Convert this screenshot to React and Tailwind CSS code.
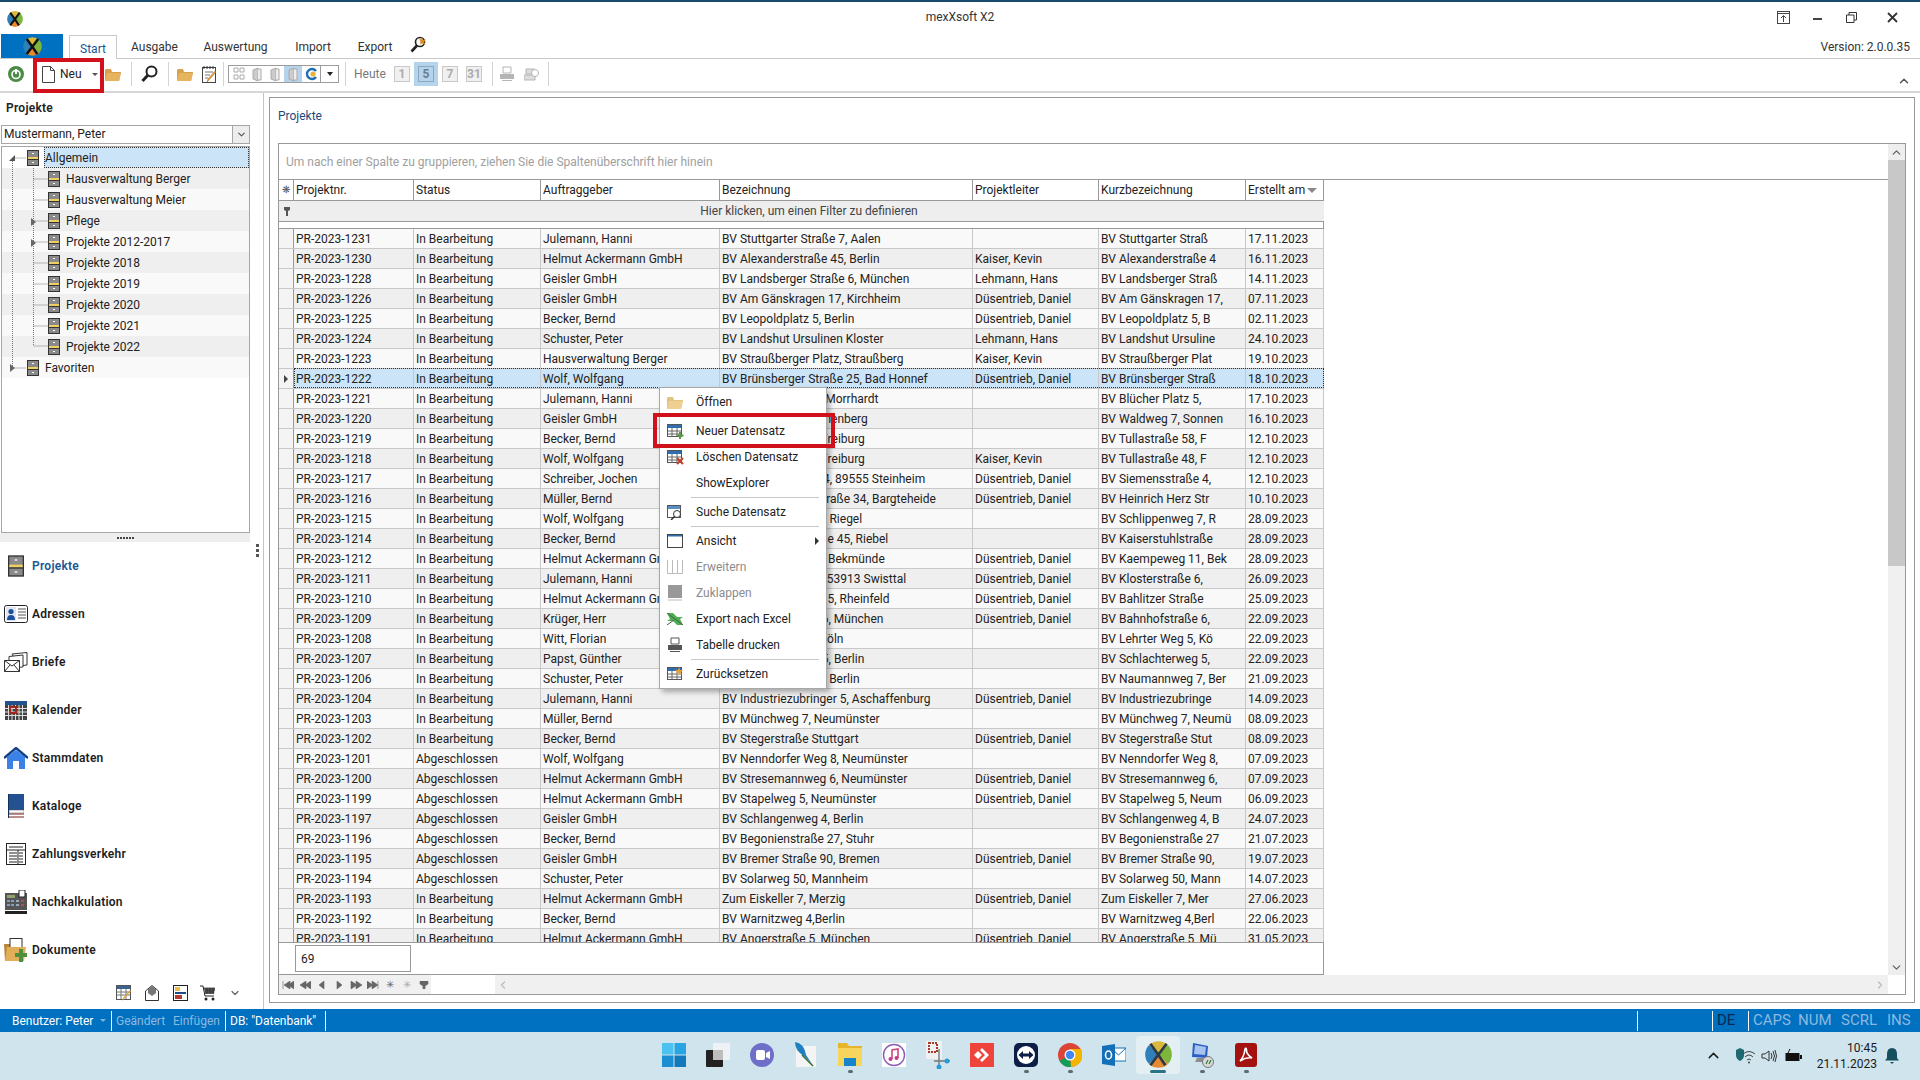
import { ChevronUp, ChevronDown, ChevronLeft, ChevronRight } from 'lucide-react';

const IB = 'In Bearbeitung';
const AB = 'Abgeschlossen';
const DD = 'Düsentrieb, Daniel';
const HA = 'Helmut Ackermann GmbH';

const rows = [
  ['PR-2023-1231', IB, 'Julemann, Hanni', 'BV Stuttgarter Straße 7, Aalen', '', 'BV Stuttgarter Straß', '17.11.2023'],
  ['PR-2023-1230', IB, HA, 'BV Alexanderstraße 45, Berlin', 'Kaiser, Kevin', 'BV Alexanderstraße 4', '16.11.2023'],
  ['PR-2023-1228', IB, 'Geisler GmbH', 'BV Landsberger Straße 6, München', 'Lehmann, Hans', 'BV Landsberger Straß', '14.11.2023'],
  ['PR-2023-1226', IB, 'Geisler GmbH', 'BV Am Gänskragen 17, Kirchheim', DD, 'BV Am Gänskragen 17,', '07.11.2023'],
  ['PR-2023-1225', IB, 'Becker, Bernd', 'BV Leopoldplatz 5, Berlin', DD, 'BV Leopoldplatz 5, B', '02.11.2023'],
  ['PR-2023-1224', IB, 'Schuster, Peter', 'BV Landshut Ursulinen Kloster', 'Lehmann, Hans', 'BV Landshut Ursuline', '24.10.2023'],
  ['PR-2023-1223', IB, 'Hausverwaltung Berger', 'BV Straußberger Platz, Straußberg', 'Kaiser, Kevin', 'BV Straußberger Plat', '19.10.2023'],
  ['PR-2023-1222', IB, 'Wolf, Wolfgang', 'BV Brünsberger Straße 25, Bad Honnef', DD, 'BV Brünsberger Straß', '18.10.2023'],
  ['PR-2023-1221', IB, 'Julemann, Hanni', 'BV Blücher Platz 5, Morrhardt', '', 'BV Blücher Platz 5,', '17.10.2023'],
  ['PR-2023-1220', IB, 'Geisler GmbH', 'BV Waldweg 7, Sonnenberg', '', 'BV Waldweg 7, Sonnen', '16.10.2023'],
  ['PR-2023-1219', IB, 'Becker, Bernd', 'BV Tullastraße 58, Freiburg', '', 'BV Tullastraße 58, F', '12.10.2023'],
  ['PR-2023-1218', IB, 'Wolf, Wolfgang', 'BV Tullastraße 48, Freiburg', 'Kaiser, Kevin', 'BV Tullastraße 48, F', '12.10.2023'],
  ['PR-2023-1217', IB, 'Schreiber, Jochen', 'BV Siemensstraße 4, 89555 Steinheim', DD, 'BV Siemensstraße 4,', '12.10.2023'],
  ['PR-2023-1216', IB, 'Müller, Bernd', 'BV Heinrich Herz Straße 34, Bargteheide', DD, 'BV Heinrich Herz Str', '10.10.2023'],
  ['PR-2023-1215', IB, 'Wolf, Wolfgang', 'BV Schlippenweg 7, Riegel', '', 'BV Schlippenweg 7, R', '28.09.2023'],
  ['PR-2023-1214', IB, 'Becker, Bernd', 'BV Kaiserstuhlstraße 45, Riebel', '', 'BV Kaiserstuhlstraße', '28.09.2023'],
  ['PR-2023-1212', IB, HA, 'BV Kaempeweg 11, Bekmünde', DD, 'BV Kaempeweg 11, Bek', '28.09.2023'],
  ['PR-2023-1211', IB, 'Julemann, Hanni', 'BV Klosterstraße 6, 53913 Swisttal', DD, 'BV Klosterstraße 6,', '26.09.2023'],
  ['PR-2023-1210', IB, HA, 'BV Bahlitzer Straße 5, Rheinfeld', DD, 'BV Bahlitzer Straße', '25.09.2023'],
  ['PR-2023-1209', IB, 'Krüger, Herr', 'BV Bahnhofstraße 6, München', DD, 'BV Bahnhofstraße 6,', '22.09.2023'],
  ['PR-2023-1208', IB, 'Witt, Florian', 'BV Lehrter Weg 5, Köln', '', 'BV Lehrter Weg 5, Kö', '22.09.2023'],
  ['PR-2023-1207', IB, 'Papst, Günther', 'BV Schlachterweg 5, Berlin', '', 'BV Schlachterweg 5,', '22.09.2023'],
  ['PR-2023-1206', IB, 'Schuster, Peter', 'BV Naumannweg 7, Berlin', '', 'BV Naumannweg 7, Ber', '21.09.2023'],
  ['PR-2023-1204', IB, 'Julemann, Hanni', 'BV Industriezubringer 5, Aschaffenburg', DD, 'BV Industriezubringe', '14.09.2023'],
  ['PR-2023-1203', IB, 'Müller, Bernd', 'BV Münchweg 7, Neumünster', '', 'BV Münchweg 7, Neumü', '08.09.2023'],
  ['PR-2023-1202', IB, 'Becker, Bernd', 'BV Stegerstraße Stuttgart', DD, 'BV Stegerstraße Stut', '08.09.2023'],
  ['PR-2023-1201', AB, 'Wolf, Wolfgang', 'BV Nenndorfer Weg 8, Neumünster', '', 'BV Nenndorfer Weg 8,', '07.09.2023'],
  ['PR-2023-1200', AB, HA, 'BV Stresemannweg 6, Neumünster', DD, 'BV Stresemannweg 6,', '07.09.2023'],
  ['PR-2023-1199', AB, HA, 'BV Stapelweg 5, Neumünster', DD, 'BV Stapelweg 5, Neum', '06.09.2023'],
  ['PR-2023-1197', AB, 'Geisler GmbH', 'BV Schlangenweg 4, Berlin', '', 'BV Schlangenweg 4, B', '24.07.2023'],
  ['PR-2023-1196', AB, 'Becker, Bernd', 'BV Begonienstraße 27, Stuhr', '', 'BV Begonienstraße 27', '21.07.2023'],
  ['PR-2023-1195', AB, 'Geisler GmbH', 'BV Bremer Straße 90, Bremen', DD, 'BV Bremer Straße 90,', '19.07.2023'],
  ['PR-2023-1194', AB, 'Schuster, Peter', 'BV Solarweg 50, Mannheim', '', 'BV Solarweg 50, Mann', '14.07.2023'],
  ['PR-2023-1193', IB, HA, 'Zum Eiskeller 7, Merzig', DD, 'Zum Eiskeller 7, Mer', '27.06.2023'],
  ['PR-2023-1192', IB, 'Becker, Bernd', 'BV Warnitzweg 4,Berlin', '', 'BV Warnitzweg 4,Berl', '22.06.2023'],
  ['PR-2023-1191', IB, HA, 'BV Angerstraße 5, München', DD, 'BV Angerstraße 5, Mü', '31.05.2023'],
];

const headers = ['Projektnr.', 'Status', 'Auftraggeber', 'Bezeichnung', 'Projektleiter', 'Kurzbezeichnung', 'Erstellt am'];
const gridCols = 'grid grid-cols-[15px_120px_127px_179px_253px_126px_147px_78px]';

const treeRows = [
  { label: 'Allgemein', level: 0, selected: true },
  { label: 'Hausverwaltung Berger', level: 1 },
  { label: 'Hausverwaltung Meier', level: 1 },
  { label: 'Pflege', level: 1 },
  { label: 'Projekte 2012-2017', level: 1 },
  { label: 'Projekte 2018', level: 1 },
  { label: 'Projekte 2019', level: 1 },
  { label: 'Projekte 2020', level: 1 },
  { label: 'Projekte 2021', level: 1 },
  { label: 'Projekte 2022', level: 1 },
  { label: 'Favoriten', level: 0 },
];

function Logo({ size = 16, x = 3, ink = '#111' }) {
  return (
    <svg width={size} height={size} viewBox="0 0 20 20" className="shrink-0">
      <path d="M10 10 L3 3 A10 10 0 0 1 17 3 Z" fill="#d9b83c" />
      <path d="M10 10 L17 3 A10 10 0 0 1 17 17 Z" fill="#7cb63a" />
      <path d="M10 10 L17 17 A10 10 0 0 1 3 17 Z" fill="#e58a2e" />
      <path d="M10 10 L3 17 A10 10 0 0 1 3 3 Z" fill="#2f7fb8" />
      <path d="M4 2 Q10 10 15 18 M16 2 Q10 10 4 18" stroke={ink} strokeWidth={x} fill="none" />
    </svg>
  );
}

function Cabinet({ w = 12, h = 16 }) {
  return (
    <svg width={w} height={h} viewBox="0 0 12 16" className="shrink-0">
      <rect width="12" height="16" fill="#333" />
      <rect x="1" y="1" width="10" height="14" fill="#8a8a8a" />
      <rect x="1" y="7" width="10" height="2" fill="#f0cf62" />
      <rect x="1" y="9" width="10" height="1" fill="#333" />
      <rect x="5" y="3" width="2" height="1" fill="#fff" />
      <rect x="5" y="12" width="2" height="1" fill="#fff" />
    </svg>
  );
}

function Folder({ w = 16, h = 13, muted }) {
  return (
    <svg width={w} height={h} viewBox="0 0 16 13" className="shrink-0">
      <path d="M0 2 L0 13 L14 13 L16 4 L7 4 L6 1 L1 1 Z" fill={muted ? '#e5c27f' : '#d9a24a'} />
      <path d="M2 5 L16 5 L14 13 L0 13 Z" fill={muted ? '#efd092' : '#e6b35f'} />
    </svg>
  );
}

function GridIcon({ badge }) {
  return (
    <svg width="17" height="15" viewBox="0 0 17 15" className="shrink-0">
      <rect x="0.5" y="0.5" width="14" height="12" fill="#fff" stroke="#555" />
      <rect x="1" y="1" width="13" height="3" fill="#2f6fb0" />
      <path d="M1 7 H14 M1 10 H14 M5 4 V12 M10 4 V12" stroke="#666" />
      {badge === 'plus' && <path d="M13 8 V15 M9.5 11.5 H16.5" stroke="#5e9a4a" strokeWidth="2" />}
      {badge === 'x' && <path d="M10 8 L16 14 M16 8 L10 14" stroke="#c0452f" strokeWidth="2.2" />}
      {badge === 'star' && <path d="M12 0 L13 3 L16 3 L14 5 L15 8 L12 6 L9 8 L10 5 L8 3 L11 3 Z" fill="#e6a23a" />}
    </svg>
  );
}

function Printer({ color = '#555' }) {
  return (
    <svg width="16" height="16" viewBox="0 0 16 16" className="shrink-0">
      <path d="M4 1 H12 V7 H4 Z" fill="#fff" stroke={color} />
      <path d="M1 8 H15 V13 H1 Z" fill={color} />
      <path d="M3 14.5 H13" stroke={color} />
    </svg>
  );
}

function Magnifier() {
  return (
    <svg width="17" height="18" viewBox="0 0 17 18" className="shrink-0">
      <circle cx="10.5" cy="6.5" r="5" fill="#fff" stroke="#222" strokeWidth="2" />
      <path d="M7 10 L1.5 16" stroke="#222" strokeWidth="3" />
    </svg>
  );
}

function Sep() {
  return <div className="h-[24px] w-px bg-[#d4d4d4]" />;
}

function CalBtn({ children }) {
  return (
    <div className="flex h-[16px] w-[16px] items-center justify-center border border-[#c9c9c9] bg-[#f0f0f0] text-[12px] leading-none font-bold text-[#aaaaaa]">
      {children}
    </div>
  );
}

function SmallView({ kind }) {
  if (kind === 'tree')
    return (
      <svg width="12" height="14" viewBox="0 0 12 14">
        <path d="M1 1 H5 V5 H1 Z M1 8 H5 V12 H1 Z M7 1 H11 V5 H7 Z M7 8 H11 V12 H7 Z" fill="none" stroke="#aaa" />
      </svg>
    );
  return (
    <svg width="10" height="15" viewBox="0 0 10 15">
      <path d="M1 3 L6 1 V14 L1 12 Z" fill="#ccc" stroke="#aaa" />
      <path d="M6 2 H9 V13 H6" fill="#eee" stroke="#aaa" />
    </svg>
  );
}

function Toolbar() {
  return (
    <div className="flex h-[34px] items-center border-b-2 border-[#d8d8d8] bg-white pb-[2px] pl-[8px]">
      <svg width="16" height="16" viewBox="0 0 16 16" className="shrink-0">
        <circle cx="8" cy="8" r="8" fill="#4d8a45" />
        <circle cx="8" cy="8.5" r="4" fill="none" stroke="#fff" strokeWidth="1.6" />
        <path d="M8 3 V8" stroke="#fff" strokeWidth="2" />
      </svg>
      <svg width="13" height="17" viewBox="0 0 13 17" className="ml-[18px] shrink-0">
        <path d="M0.5 0.5 H8.5 L12.5 4.5 V16.5 H0.5 Z" fill="#fff" stroke="#444" />
        <path d="M8.5 0.5 V4.5 H12.5" fill="none" stroke="#444" />
      </svg>
      <span className="ml-[5px] w-[22px] text-[12px] text-[#222]">Neu</span>
      <span className="ml-[10px] h-0 w-0 border-x-[3px] border-t-[3px] border-x-transparent border-t-[#555]" />
      <div className="ml-[7px]"><Folder /></div>
      <div className="ml-[10px]"><Sep /></div>
      <div className="ml-[9px]"><Magnifier /></div>
      <div className="ml-[10px]"><Sep /></div>
      <div className="ml-[8px]"><Folder /></div>
      <svg width="15" height="17" viewBox="0 0 15 17" className="ml-[9px] shrink-0">
        <rect x="0.5" y="1.5" width="13" height="15" fill="#fff" stroke="#444" />
        <path d="M2 0 V3 M5 0 V3 M8 0 V3 M11 0 V3" stroke="#333" />
        <path d="M3 6 H11 M3 9 H8 M3 12 H6" stroke="#777" />
        <path d="M14 6 L7 14 L5 16 L6 13 L13 5 Z" fill="#e2a23a" stroke="#a5671d" strokeWidth="0.5" />
      </svg>
      <div className="ml-[6px]"><Sep /></div>
      <div className="ml-[4px] flex h-[18px] w-[111px] items-center border border-[#9c9c9c]">
        <div className="flex w-[18px] justify-center pl-[2px]"><SmallView kind="tree" /></div>
        <div className="flex w-[19px] justify-center"><SmallView /></div>
        <div className="flex w-[18px] justify-center"><SmallView /></div>
        <div className="flex h-full w-[18px] items-center justify-center bg-[#b5d4ec]"><SmallView /></div>
        <div className="flex w-[18px] justify-center">
          <svg width="12" height="14" viewBox="0 0 12 14">
            <path d="M11 4 A5 5 0 1 0 11 10" fill="none" stroke="#1f6fb5" strokeWidth="2.4" />
            <circle cx="8" cy="7" r="2.6" fill="#e8b23a" />
          </svg>
        </div>
        <div className="flex h-full flex-1 items-center justify-center border-l border-[#9c9c9c]">
          <span className="h-0 w-0 border-x-[3px] border-t-[4px] border-x-transparent border-t-[#222]" />
        </div>
      </div>
      <div className="ml-[6px]"><Sep /></div>
      <span className="ml-[8px] w-[32px] text-[12px] text-[#777]">Heute</span>
      <div className="ml-[8px]"><CalBtn>1</CalBtn></div>
      <div className="ml-[4px] flex h-[24px] w-[24px] items-center justify-center bg-[#b5d4ec]">
        <div className="flex h-[16px] w-[16px] items-center justify-center border border-[#8aa9c4] text-[12px] leading-none font-bold text-[#6c7f90]">5</div>
      </div>
      <div className="ml-[4px]"><CalBtn>7</CalBtn></div>
      <div className="ml-[8px]"><CalBtn>31</CalBtn></div>
      <div className="ml-[10px]"><Sep /></div>
      <div className="ml-[6px]"><Printer color="#b5b5b5" /></div>
      <svg width="16" height="16" viewBox="0 0 16 16" className="ml-[9px] shrink-0">
        <path d="M2 3 H10 V8 H2 Z M0 9 H11 V14 H0 Z" fill="#ddd" stroke="#b5b5b5" />
        <circle cx="11" cy="7" r="3.5" fill="#fff" stroke="#b5b5b5" />
      </svg>
      <div className="ml-[8px]"><Sep /></div>
      <ChevronUp size={14} strokeWidth={2.5} className="mt-[14px] mr-[9px] ml-auto text-[#555]" />
    </div>
  );
}

function NavIcon({ name }) {
  switch (name) {
    case 'Projekte':
      return <Cabinet w={16} h={22} />;
    case 'Adressen':
      return (
        <svg width="24" height="18" viewBox="0 0 24 18">
          <rect x="0.5" y="0.5" width="23" height="17" rx="2" fill="#fff" stroke="#222" />
          <rect x="2" y="2" width="10" height="14" fill="#dfe8f2" />
          <circle cx="7" cy="6.5" r="2.6" fill="#1d4f9c" />
          <path d="M3 15 Q3 10 7 10 Q11 10 11 15 Z" fill="#1d4f9c" />
          <path d="M14 4 H22 M14 7 H22 M14 10 H22 M14 13 H22" stroke="#555" />
        </svg>
      );
    case 'Briefe':
      return (
        <svg width="24" height="20" viewBox="0 0 24 20">
          <path d="M8 2 L23 0.5 V13 L15 14 Z" fill="#fff" stroke="#333" />
          <path d="M5 4.5 L19 3 V15 L5 16 Z" fill="#fff" stroke="#333" />
          <path d="M0.5 8.5 H15.5 V19.5 H0.5 Z" fill="#fff" stroke="#333" />
          <path d="M0.5 8.5 L8 14 L15.5 8.5 M0.5 19.5 L6 13 M15.5 19.5 L10 13" fill="none" stroke="#333" />
        </svg>
      );
    case 'Kalender':
      return (
        <svg width="22" height="19" viewBox="0 0 22 19">
          <rect width="22" height="19" fill="#444" />
          <rect width="22" height="4" fill="#23508f" />
          <path d="M0 7.5 H22 M0 11 H22 M0 14.5 H22 M3.5 4 V19 M7 4 V19 M10.5 4 V19 M14 4 V19 M17.5 4 V19" stroke="#ddd" />
          <rect x="5" y="6" width="6" height="6" fill="none" stroke="#a3261f" strokeWidth="2" />
        </svg>
      );
    case 'Stammdaten':
      return (
        <svg width="24" height="22" viewBox="0 0 24 22">
          <path d="M3 10 V22 H9 V14 H15 V22 H21 V10 L12 3 Z" fill="#3b82e8" />
          <path d="M0 11 L12 1 L24 11" fill="none" stroke="#123f8a" strokeWidth="2.4" />
        </svg>
      );
    case 'Kataloge':
      return (
        <svg width="16" height="24" viewBox="0 0 16 24">
          <rect x="1" y="0" width="15" height="16" fill="#24518f" />
          <rect x="1" y="16" width="15" height="3" fill="#fff" stroke="#555" strokeWidth="0.5" />
          <path d="M1 20 H16 M1 23 H16" stroke="#7a1f1f" />
          <path d="M0.5 0 V24" stroke="#12305c" />
        </svg>
      );
    case 'Zahlungsverkehr':
      return (
        <svg width="20" height="22" viewBox="0 0 20 22">
          <rect x="0.5" y="0.5" width="19" height="21" fill="#fff" stroke="#222" />
          <path d="M3 4 H17 M0 7 H20 M3 10 H11 M3 13 H11 M3 16 H11 M3 19 H11 M13 10 H17 M13 13 H17 M13 16 H17 M13 19 H17" stroke="#222" />
          <path d="M12 7 V22" stroke="#222" />
        </svg>
      );
    case 'Nachkalkulation':
      return (
        <svg width="22" height="24" viewBox="0 0 22 24">
          <rect y="3" width="22" height="17" fill="#555" />
          <rect x="2" y="5" width="8" height="3" fill="#8fa36a" />
          <rect x="14" y="0" width="6" height="7" fill="#fff" stroke="#222" />
          <rect x="2" y="10" width="3" height="2" fill="#7d9ec8" /><rect x="6" y="10" width="3" height="2" fill="#7d9ec8" />
          <rect x="2" y="14" width="3" height="2" fill="#7d9ec8" /><rect x="6" y="14" width="3" height="2" fill="#7d9ec8" />
          <rect x="11" y="10" width="3" height="2" fill="#9ab" /><rect x="16" y="10" width="3" height="2" fill="#b5533f" />
          <rect x="11" y="14" width="3" height="2" fill="#9ab" /><rect x="16" y="14" width="3" height="2" fill="#b5533f" />
          <rect y="21" width="22" height="3" fill="#222" />
        </svg>
      );
    default:
      return (
        <svg width="24" height="24" viewBox="0 0 24 24">
          <path d="M0 6 H6 V4 H10 V23 H1 Z" fill="#b9873a" />
          <rect x="6" y="0.5" width="12" height="12" fill="#fff" stroke="#333" />
          <path d="M3 9 H22 L20 23 H1 Z" fill="#e3ae5a" />
          <rect x="15" y="11" width="4" height="13" fill="#4f8f3f" />
          <rect x="11" y="15" width="12" height="4" fill="#4f8f3f" />
        </svg>
      );
  }
}

const navItems = ['Projekte', 'Adressen', 'Briefe', 'Kalender', 'Stammdaten', 'Kataloge', 'Zahlungsverkehr', 'Nachkalkulation', 'Dokumente'];

function LeftPanel() {
  return (
    <div className="relative flex w-[264px] shrink-0 flex-col border-r border-[#c4c4c4]">
      <div className="flex h-[32px] items-center pb-[2px] pl-[6px] text-[12px] font-semibold tracking-[0.25px] text-[#222]">Projekte</div>
      <div className="ml-px flex h-[19px] w-[249px] items-center border border-[#a6a6a6] text-[12px] text-[#222]">
        <span className="flex-1 pb-px pl-[2px]">Mustermann, Peter</span>
        <div className="flex h-full w-[17px] items-center justify-center border-l border-[#a6a6a6] bg-[#ededed]">
          <ChevronDown size={11} strokeWidth={2.5} className="text-[#555]" />
        </div>
      </div>
      <div className="relative mt-[2px] ml-px h-[387px] w-[249px] border border-[#a6a6a6] text-[12px] text-[#222]">
        {treeRows.map((r, i) => (
          <div
            key={r.label}
            className={`flex h-[21px] items-center ${i === 0 ? 'bg-white' : i % 2 === 1 ? 'bg-[#efefef]' : 'bg-[#f9f9f9]'} ${r.level === 0 ? 'pl-[25px]' : 'pl-[46px]'}`}
          >
            <Cabinet />
            <span
              className={`flex h-full items-center ${r.selected ? 'ml-[5px] flex-1 border border-dotted border-[#333] bg-[#cce4f7]' : 'ml-[6px]'}`}
            >
              {r.label}
            </span>
          </div>
        ))}
        <svg width="60" height="232" viewBox="0 0 60 232" className="absolute top-0 left-0">
          <path d="M10.5 14 V221 M10.5 221 H24 M10.5 11 H24 M31.5 21 V199 M31.5 32 H46 M31.5 53 H46 M31.5 74 H46 M31.5 95 H46 M31.5 116 H46 M31.5 137 H46 M31.5 158 H46 M31.5 179 H46 M31.5 199 H46" stroke="#777" strokeDasharray="1 1" fill="none" />
          <path d="M7 14 L13 8 V14 Z" fill="#555" />
          <path d="M29 71 L34 75 L29 79 Z M29 92 L34 96 L29 100 Z M8 217 L13 221 L8 225 Z" fill="#666" />
        </svg>
      </div>
      <div className="flex h-[9px] w-[250px] items-center justify-center gap-px bg-[#eeeeee]">
        {[0, 1, 2, 3, 4, 5].map((d) => (
          <span key={d} className="h-[2px] w-[2px] bg-[#444]" />
        ))}
      </div>
      <div className="absolute top-[451px] left-[256px] flex flex-col gap-[2px]">
        {[0, 1, 2].map((d) => (
          <span key={d} className="h-[3px] w-[3px] bg-[#555]" />
        ))}
      </div>
      <div className="flex flex-col">
        {navItems.map((n, i) => (
          <div key={n} className={`flex h-[48px] items-center text-[12px] font-semibold tracking-[0.25px] ${i === 0 ? 'text-[#1a5590]' : 'text-[#1c1c1c]'}`}>
            <div className="flex w-[32px] shrink-0 justify-center"><NavIcon name={n} /></div>
            <span>{n}</span>
          </div>
        ))}
      </div>
      <div className="flex flex-1 items-center pt-[3px] pl-[116px]">
        <div className="flex w-[16px] justify-center">
          <svg width="16" height="16" viewBox="0 0 16 16">
            <rect x="0.5" y="0.5" width="14" height="14" fill="#fff" stroke="#555" />
            <rect x="1" y="1" width="13" height="3" fill="#38648f" />
            <path d="M1 7 H14 M1 10 H14 M5 4 V14 M10 4 V14" stroke="#777" />
            <path d="M15 6 L8 14 L6 16 L7 13 L14 5 Z" fill="#e2a23a" />
          </svg>
        </div>
        <div className="ml-[12px] flex w-[16px] justify-center">
          <svg width="14" height="16" viewBox="0 0 14 16">
            <path d="M0.5 6 L7 0.5 L13.5 6 V15.5 H0.5 Z" fill="#fff" stroke="#333" />
            <path d="M3 4 L7 1 L11 4 L11 8 L7 11 L3 8 Z" fill="#777" />
          </svg>
        </div>
        <div className="ml-[12px] flex w-[16px] justify-center">
          <svg width="15" height="16" viewBox="0 0 15 16">
            <rect x="0.5" y="0.5" width="14" height="15" fill="#fff" stroke="#222" />
            <rect x="2" y="2" width="5" height="4" fill="#e7bf4a" />
            <rect x="2" y="7" width="11" height="2" fill="#1f4a8a" />
            <rect x="2" y="10" width="7" height="4" fill="#b23a2f" />
          </svg>
        </div>
        <div className="ml-[12px] flex w-[16px] justify-center">
          <svg width="16" height="16" viewBox="0 0 16 16">
            <path d="M0 1 H3 L5 11 H14" fill="none" stroke="#222" />
            <path d="M4 3 H15 L14 9 H5 Z" fill="#666" />
            <path d="M4 3 H15 M4.5 5 H15 M5 7 H14 M7 3 V9 M10 3 V9 M13 3 V9" stroke="#222" strokeWidth="0.7" />
            <circle cx="6" cy="14" r="1.5" fill="#222" />
            <circle cx="13" cy="14" r="1.5" fill="#222" />
          </svg>
        </div>
        <ChevronDown size={12} strokeWidth={2.5} className="ml-[13px] text-[#666]" />
      </div>
    </div>
  );
}

function DataGrid() {
  return (
    <div className="flex h-[852px] border border-[#999] text-[12px] text-[#222]">
      <div className="flex min-w-0 flex-1 flex-col">
        <div className="flex h-[36px] items-center border-b border-[#999] pl-[7px] text-[#a0a0a0]">
          Um nach einer Spalte zu gruppieren, ziehen Sie die Spaltenüberschrift hier hinein
        </div>
        <div className={`${gridCols} h-[21px] w-[1045px] border-b border-[#999]`}>
          <div className="flex items-center justify-center border-r border-[#999] text-[10px] leading-none text-[#555]">❋</div>
          {headers.map((h, i) => (
            <div key={h} className="flex items-center border-r border-[#999] pl-[2px] whitespace-nowrap">
              <span className="flex-1">{h}</span>
              {i === 6 && <span className="mr-[6px] h-0 w-0 border-x-[5px] border-t-[5px] border-x-transparent border-t-[#888]" />}
            </div>
          ))}
        </div>
        <div className="flex h-[21px] w-[1045px] border-b border-[#999] bg-[#eeeeee]">
          <div className="flex w-[15px] items-center justify-center">
            <svg width="6" height="9" viewBox="0 0 6 9">
              <path d="M0 0 H6 V3 L4 4 V9 H2 V4 L0 3 Z" fill="#555" />
            </svg>
          </div>
          <div className="flex flex-1 items-center justify-center text-[#444]">Hier klicken, um einen Filter zu definieren</div>
        </div>
        <div className="h-[7px] w-[1045px] border-r border-b border-[#999]" />
        <div className="h-[713px] w-[1045px] overflow-hidden">
          {rows.map((r, i) => {
            const selected = r[0] === 'PR-2023-1222';
            const bg = selected ? 'bg-[#cce4f7]' : i % 2 === 1 ? 'bg-[#efefef]' : 'bg-[#f9f9f9]';
            return (
              <div key={r[0]} className={`${gridCols} relative h-[20px] border-b border-[#c8c8c8]`}>
                <div className="flex items-center justify-center border-r border-[#999] bg-[#f4f4f4]">
                  {selected && <span className="h-0 w-0 border-y-[4px] border-l-[4px] border-y-transparent border-l-[#444]" />}
                </div>
                {r.map((c, j) => (
                  <div key={j} className={`overflow-hidden border-r border-[#c8c8c8] pl-[2px] leading-[20px] whitespace-nowrap ${bg}`}>
                    {c}
                  </div>
                ))}
                {selected && <div className="absolute top-[-1px] right-0 bottom-0 left-[15px] border border-dotted border-[#333]" />}
              </div>
            );
          })}
        </div>
        <div className="flex h-[33px] w-[1045px] items-center border border-l-0 border-[#999] pl-[16px]">
          <div className="flex h-[27px] w-[116px] items-center border border-[#999] pl-[5px]">69</div>
        </div>
        <div className="flex h-[19px] items-center bg-[#f0f0f0]">
          <div className="flex w-[152px] items-center gap-[5px] pl-[3px] text-[#666]">
            <NavTri d="M1 0 V8 M8 0 L2 4 L8 8 Z M12 0 L6 4 L12 8 Z" />
            <NavTri d="M7 0 L1 4 L7 8 Z M12 0 L6 4 L12 8 Z" />
            <NavTri d="M8 0 L3 4 L8 8 Z" />
            <NavTri d="M4 0 L9 4 L4 8 Z" />
            <NavTri d="M1 0 L7 4 L1 8 Z M6 0 L12 4 L6 8 Z" />
            <NavTri d="M0 0 L6 4 L0 8 Z M5 0 L11 4 L5 8 Z M11 0 V8" />
            <span className="w-[12px] text-center text-[10px] leading-none">✳</span>
            <span className="w-[12px] text-center text-[10px] leading-none text-[#aaa]">✳</span>
            <NavTri d="M2 0 H10 V3 L7 5 V8 H5 V5 L2 3 Z" />
          </div>
          <div className="h-full w-[64px] bg-white" />
          <div className="flex flex-1 items-center justify-between pr-[2px]">
            <ChevronLeft size={12} strokeWidth={2.5} className="ml-[2px] text-[#bbb]" />
            <ChevronRight size={12} strokeWidth={2.5} className="text-[#bbb]" />
          </div>
        </div>
      </div>
      <div className="flex w-[17px] flex-col">
        <div className="flex h-[16px] items-center justify-center bg-[#eeeeee]">
          <ChevronUp size={13} strokeWidth={2.5} className="text-[#666]" />
        </div>
        <div className="h-[406px] bg-[#c8c8c8]" />
        <div className="flex-1 bg-[#f0f0f0]" />
        <div className="flex h-[16px] items-center justify-center bg-[#eeeeee]">
          <ChevronDown size={13} strokeWidth={2.5} className="text-[#666]" />
        </div>
        <div className="h-[19px] bg-white" />
      </div>
    </div>
  );
}

function NavTri({ d }) {
  return (
    <svg width="12" height="8" viewBox="0 0 12 8" className="shrink-0">
      <path d={d} fill="#666" stroke="#666" strokeWidth="0.6" />
    </svg>
  );
}

function MenuItem({ icon, label, disabled, arrow }) {
  return (
    <div className={`flex h-[26px] items-center ${disabled ? 'text-[#8c8c8c]' : 'text-[#222]'}`}>
      <div className="flex w-[30px] shrink-0 justify-center">{icon}</div>
      <span className="ml-[6px] flex-1">{label}</span>
      {arrow && <span className="mr-[7px] h-0 w-0 border-y-[4px] border-l-[4px] border-y-transparent border-l-[#333]" />}
    </div>
  );
}

function MenuSep() {
  return (
    <div className="flex h-[3px] items-center pr-[7px] pl-[31px]">
      <div className="h-px w-full bg-[#c8c8c8]" />
    </div>
  );
}

function ContextMenu() {
  return (
    <div className="absolute top-[387px] left-[659px] w-[168px] border border-[#a8a8a8] bg-white pt-px pb-px text-[12px] shadow-[3px_3px_5px_rgba(0,0,0,0.3)]">
      <MenuItem icon={<Folder muted />} label="Öffnen" />
      <MenuSep />
      <MenuItem icon={<GridIcon badge="plus" />} label="Neuer Datensatz" />
      <MenuItem icon={<GridIcon badge="x" />} label="Löschen Datensatz" />
      <MenuItem label="ShowExplorer" />
      <MenuSep />
      <MenuItem
        icon={
          <svg width="16" height="15" viewBox="0 0 16 15">
            <rect x="0.5" y="0.5" width="13" height="12" fill="#fff" stroke="#555" />
            <rect x="1" y="1" width="12" height="3" fill="#5b8ec4" />
            <circle cx="10" cy="9" r="3.5" fill="#fff" stroke="#333" />
            <path d="M7.5 11.5 L4 15" stroke="#333" strokeWidth="1.5" />
          </svg>
        }
        label="Suche Datensatz"
      />
      <MenuSep />
      <MenuItem
        icon={
          <svg width="16" height="14" viewBox="0 0 16 14">
            <rect x="0.5" y="0.5" width="15" height="13" fill="#fff" stroke="#444" />
            <rect x="1" y="1" width="14" height="1.5" fill="#2f6fb0" />
          </svg>
        }
        label="Ansicht"
        arrow
      />
      <MenuItem
        disabled
        label="Erweitern"
        icon={
          <svg width="16" height="14" viewBox="0 0 16 14">
            <path d="M0.5 0 V13.5 H15.5 V0 M5.5 0 V13.5 M10.5 0 V13.5" fill="none" stroke="#bbb" />
          </svg>
        }
      />
      <MenuItem
        disabled
        label="Zuklappen"
        icon={
          <svg width="14" height="16" viewBox="0 0 14 16">
            <rect width="14" height="13" fill="#999" />
            <path d="M0 15 H14" stroke="#bbb" />
          </svg>
        }
      />
      <MenuItem
        label="Export nach Excel"
        icon={
          <svg width="16" height="12" viewBox="0 0 16 12">
            <path d="M0 0 H6 L10 4 H16 L13 6 L16 12 H10 L6 8 H0 L3 6 Z" fill="#4caf50" />
            <path d="M0 0 L16 12 M0 12 L7 7" stroke="#555" />
          </svg>
        }
      />
      <MenuItem icon={<Printer />} label="Tabelle drucken" />
      <MenuSep />
      <MenuItem icon={<GridIcon badge="star" />} label="Zurücksetzen" />
    </div>
  );
}

function StatusBar() {
  const sep = 'h-[20px] w-px bg-white';
  return (
    <div className="flex h-[23px] items-center bg-[#0070c0] text-[12px] text-white">
      <span className="w-[91px] pl-[12px] whitespace-nowrap">Benutzer: Peter</span>
      <span className="ml-[9px] h-0 w-0 border-x-[3px] border-t-[3px] border-x-transparent border-t-[#7fb2de]" />
      <div className={`ml-[5px] ${sep}`} />
      <span className="ml-[4px] w-[48px] text-[#8db9e0]">Geändert</span>
      <span className="ml-[9px] w-[47px] text-[#8db9e0]">Einfügen</span>
      <div className={`ml-[5px] ${sep}`} />
      <span className="ml-[4px] w-[90px] whitespace-nowrap">DB: "Datenbank"</span>
      <div className={`ml-[5px] ${sep}`} />
      <div className="ml-auto flex items-center text-[15px] leading-none text-[#8db9e0]">
        <div className={sep} />
        <div className={`ml-[74px] ${sep}`} />
        <span className="ml-[4px] w-[31px] text-[#0a2a55]">DE</span>
        <div className={sep} />
        <span className="ml-[4px] w-[36px]">CAPS</span>
        <span className="ml-[9px] w-[33px]">NUM</span>
        <span className="ml-[10px] w-[34px]">SCRL</span>
        <span className="ml-[12px] w-[24px]">INS</span>
        <span className="w-[9px]" />
      </div>
    </div>
  );
}

function TaskIcon({ children, dot, active }) {
  return (
    <div className={`relative flex h-[38px] w-[44px] items-center justify-center ${active ? 'rounded-sm bg-[#e3eff3]' : ''}`}>
      {children}
      {dot && <span className={`absolute bottom-[1px] h-[3px] rounded-full ${active ? 'w-[16px] bg-[#2b7486]' : 'w-[5px] bg-[#5c6b70]'}`} />}
    </div>
  );
}

function Taskbar() {
  return (
    <div className="grid h-[48px] grid-cols-[1fr_auto_1fr] items-center bg-[#cfe4ec]">
      <div />
      <div className="flex items-center pb-[3px]">
        <TaskIcon>
          <svg width="24" height="24" viewBox="0 0 24 24">
            <path d="M0 0 H11.5 V11.5 H0 Z" fill="#4cc2f1" />
            <path d="M12.5 0 H24 V11.5 H12.5 Z" fill="#2aa5e3" />
            <path d="M0 12.5 H11.5 V24 H0 Z" fill="#1b8fd1" />
            <path d="M12.5 12.5 H24 V24 H12.5 Z" fill="#1279bc" />
          </svg>
        </TaskIcon>
        <TaskIcon>
          <svg width="24" height="24" viewBox="0 0 24 24">
            <rect x="7" y="0" width="17" height="17" rx="1" fill="#eef2f4" />
            <rect x="0" y="7" width="17" height="17" rx="1" fill="#222" />
            <rect x="7" y="7" width="10" height="10" fill="#bdbdbd" />
          </svg>
        </TaskIcon>
        <TaskIcon>
          <svg width="24" height="24" viewBox="0 0 24 24">
            <circle cx="12" cy="12" r="12" fill="#6f6fc9" />
            <rect x="6" y="7" width="9" height="10" rx="2" fill="#fff" />
            <path d="M16 10 L20 8 V16 L16 14 Z" fill="#fff" />
          </svg>
        </TaskIcon>
        <TaskIcon>
          <svg width="24" height="28" viewBox="0 0 24 28">
            <rect x="2" y="5" width="20" height="21" fill="#f4f4f4" />
            <path d="M1 1 Q10 2 12 14 L18 23 L10 15 Q1 10 1 1 Z" fill="#1f7fc0" />
            <path d="M8 14 L19 25" stroke="#2d6a2d" strokeWidth="1.4" />
          </svg>
        </TaskIcon>
        <TaskIcon dot>
          <svg width="24" height="23" viewBox="0 0 24 23">
            <path d="M0 0 H9 L11 3 H24 V23 H0 Z" fill="#e6b52d" />
            <path d="M0 5 H24 V23 H0 Z" fill="#f7d55c" />
            <rect x="6" y="15" width="12" height="8" fill="#1584c9" />
          </svg>
        </TaskIcon>
        <TaskIcon>
          <svg width="24" height="24" viewBox="0 0 24 24">
            <rect width="24" height="24" fill="#fff" />
            <circle cx="12" cy="12" r="10.5" fill="#fff" stroke="#8f5cb5" strokeWidth="1.4" />
            <path d="M10 16 V7 L16 6 V15" fill="none" stroke="#d2447e" strokeWidth="1.6" />
            <circle cx="8.5" cy="16" r="2" fill="#c43c8c" />
            <circle cx="14.5" cy="15" r="2" fill="#c43c8c" />
          </svg>
        </TaskIcon>
        <TaskIcon>
          <svg width="24" height="28" viewBox="0 0 24 28">
            <rect x="0" y="0" width="16" height="18" fill="#f0f0f0" />
            <rect x="3" y="2" width="8" height="9" fill="none" stroke="#a33a2a" strokeWidth="2" strokeDasharray="2 1" />
            <path d="M13 8 V28 M8 20 H24" stroke="#777" strokeWidth="1.4" />
            <circle cx="21" cy="20" r="2.5" fill="#2a9bd8" />
            <circle cx="13" cy="26" r="2.5" fill="#2a9bd8" />
          </svg>
        </TaskIcon>
        <TaskIcon>
          <svg width="24" height="24" viewBox="0 0 24 24">
            <rect width="24" height="24" fill="#ef443b" />
            <path d="M4 12 L8 8 L12 12 L8 16 Z" fill="#fff" />
            <path d="M12 5 L19 12 L12 19 L10 17 L15 12 L10 7 Z" fill="#fff" />
          </svg>
        </TaskIcon>
        <TaskIcon dot>
          <svg width="24" height="24" viewBox="0 0 24 24">
            <rect width="24" height="24" rx="5" fill="#0c1e45" />
            <circle cx="12" cy="12" r="9" fill="#fff" />
            <path d="M4.5 12 L9 8 V10.5 H15 V8 L19.5 12 L15 16 V13.5 H9 V16 Z" fill="#0c1e45" />
          </svg>
        </TaskIcon>
        <TaskIcon dot>
          <svg width="24" height="24" viewBox="0 0 24 24">
            <circle cx="12" cy="12" r="12" fill="#db4437" />
            <path d="M12 12 L1.6 18 A12 12 0 0 0 13 24 Z" fill="#0f9d58" />
            <path d="M12 6 H23 A12 12 0 0 1 13 24 Z" fill="#f4b400" />
            <circle cx="12" cy="12" r="5.5" fill="#fff" />
            <circle cx="12" cy="12" r="4.2" fill="#4285f4" />
          </svg>
        </TaskIcon>
        <TaskIcon>
          <svg width="24" height="22" viewBox="0 0 24 22">
            <rect x="9" y="4" width="15" height="13" fill="#fff" stroke="#1370b8" />
            <path d="M9 4 L16.5 11 L24 4" fill="none" stroke="#1370b8" />
            <path d="M0 2 L13 0 V22 L0 20 Z" fill="#1370b8" />
            <ellipse cx="6.5" cy="11" rx="3" ry="4" fill="none" stroke="#fff" strokeWidth="1.6" />
          </svg>
        </TaskIcon>
        <TaskIcon dot active>
          <Logo size={27} x={2} ink="#2c3a48" />
        </TaskIcon>
        <TaskIcon dot>
          <svg width="24" height="26" viewBox="0 0 24 26">
            <path d="M3 1 L18 4 L17 16 L2 15 Z" fill="#2b5fc7" />
            <path d="M5 3 L16 5 L15 13 L4 12 Z" fill="#a7c4ef" />
            <path d="M7 16 H13 V20 H5 Z" fill="#8d8d8d" />
            <circle cx="18" cy="20" r="5.5" fill="#d9d9d9" stroke="#777" />
            <path d="M16 22 L18 18 M19 22 L21 18" stroke="#2f7f3f" strokeWidth="1.2" />
          </svg>
        </TaskIcon>
        <TaskIcon dot>
          <svg width="22" height="24" viewBox="0 0 22 24">
            <rect width="22" height="24" rx="3" fill="#a4120f" />
            <path d="M5 18 Q9 14 10 6 Q11 4 11.5 7 Q11 11 17 15 Q11 14 5 18 Z" fill="none" stroke="#fff" strokeWidth="1.6" />
          </svg>
        </TaskIcon>
      </div>
      <div className="flex items-center justify-end pb-[1px] text-[#1a1a1a]">
        <ChevronUp size={17} strokeWidth={2} />
        <svg width="20" height="16" viewBox="0 0 20 16" className="ml-[14px]">
          <path d="M0 2 L4 0 L8 2 V7 Q8 11 4 13 Q0 11 0 7 Z" fill="#1f6a72" />
          <path d="M7 6 Q13 1 19 6 M9 9 Q13 5 17 9 M11 12 Q13 10 15 12" fill="none" stroke="#444" />
          <circle cx="13" cy="14.5" r="1" fill="#444" />
        </svg>
        <svg width="17" height="14" viewBox="0 0 17 14" className="ml-[5px]">
          <path d="M1 5 H4 L8 2 V12 L4 9 H1 Z M10 4 Q12 7 10 10 M12 2 Q15 7 12 12 M14 1 Q17 7 14 13" fill="none" stroke="#333" />
        </svg>
        <svg width="17" height="14" viewBox="0 0 17 14" className="ml-[7px]">
          <rect x="0.5" y="4" width="14" height="8" fill="#111" />
          <rect x="15" y="6" width="2" height="4" fill="#111" />
          <path d="M5 0 L2 6 H5 L4 10" fill="none" stroke="#111" />
        </svg>
        <div className="ml-[15px] text-right text-[12px] leading-[16px]">
          <div>10:45</div>
          <div>21.11.2023</div>
        </div>
        <svg width="14" height="16" viewBox="0 0 14 16" className="mr-[21px] ml-[8px]">
          <path d="M7 0 Q12 0 12 6 V10 L14 12.5 H0 L2 10 V6 Q2 0 7 0 Z" fill="#17505f" />
          <path d="M5 14 H9 L7 16 Z" fill="#17505f" />
        </svg>
      </div>
    </div>
  );
}

export default function App() {
  return (
    <div className="relative flex h-[1080px] w-[1920px] flex-col overflow-hidden bg-white font-['Roboto',sans-serif]">
      <div className="grid h-[35px] grid-cols-3 border-t-2 border-[#1a4a6e]">
        <div className="flex items-center pl-[7px]"><Logo size={16} x={2.6} /></div>
        <div className="flex items-center justify-center pb-[3px] text-[12px] text-[#333]">mexXsoft X2</div>
        <div className="flex items-center justify-end pb-[3px]">
          <svg width="13" height="13" viewBox="0 0 13 13">
            <rect x="0.5" y="0.5" width="12" height="12" fill="none" stroke="#444" />
            <path d="M1 2.5 H12 M6.5 11 V5 M4 7 L6.5 4.5 L9 7" fill="none" stroke="#444" />
          </svg>
          <span className="ml-[23px] h-[2px] w-[9px] translate-y-[2px] bg-[#444]" />
          <svg width="11" height="11" viewBox="0 0 11 11" className="ml-[24px]">
            <path d="M0.5 3 H8 V10.5 H0.5 Z M3 3 V0.5 H10.5 V8 H8" fill="none" stroke="#333" />
          </svg>
          <svg width="11" height="11" viewBox="0 0 11 11" className="mr-[22px] ml-[30px]">
            <path d="M1 1 L10 10 M10 1 L1 10" stroke="#333" strokeWidth="1.8" />
          </svg>
        </div>
      </div>
      <div className="relative flex h-[24px] items-end border-b border-[#c9c9c9] text-[12px] text-[#333]">
        <div className="ml-px flex h-[24px] w-[62px] items-center justify-center bg-[#0070c0]"><Logo size={19} x={2.6} /></div>
        <div className="ml-[6px] flex h-[24px] w-[48px] translate-y-px items-center justify-center border border-b-0 border-[#c9c9c9] bg-white pt-[2px] text-[#1a5590]">Start</div>
        <span className="ml-[14px] flex h-[24px] w-[47px] items-center justify-center pt-[2px]">Ausgabe</span>
        <span className="ml-[26px] flex h-[24px] w-[63px] items-center justify-center pt-[2px]">Auswertung</span>
        <span className="ml-[28px] flex h-[24px] w-[36px] items-center justify-center pt-[2px]">Import</span>
        <span className="ml-[27px] flex h-[24px] w-[34px] items-center justify-center pt-[2px]">Export</span>
        <svg width="17" height="18" viewBox="0 0 17 18" className="mb-[4px] ml-[18px]">
          <circle cx="10" cy="6" r="4.5" fill="#fff" stroke="#222" strokeWidth="1.6" />
          <path d="M7 9.5 L1.5 15.5" stroke="#222" strokeWidth="2.6" />
          <path d="M12 1 L13 4 L16 3.5 L14 6 L15.5 8.5 L12 7.5 L10 8.5 L10.5 5.5 L9 3 L11.5 3.5 Z" fill="#d98a25" />
        </svg>
        <span className="absolute top-[3px] right-[10px]">Version: 2.0.0.35</span>
      </div>
      <Toolbar />
      <div className="flex h-[916px]">
        <LeftPanel />
        <div className="flex-1 pt-[4px] pr-[5px] pb-[6px] pl-[5px]">
          <div className="h-full border border-[#999] pr-[8px] pl-[8px]">
            <div className="flex h-[45px] items-start pt-[9px] text-[12px] text-[#1a4a7a]">Projekte</div>
            <DataGrid />
          </div>
        </div>
      </div>
      <StatusBar />
      <Taskbar />
      <ContextMenu />
      <div className="absolute top-[58px] left-[33px] h-[35px] w-[71px] border-[4px] border-[#d0111b]" />
      <div className="absolute top-[413px] left-[653px] h-[35px] w-[182px] border-[4px] border-[#d0111b]" />
    </div>
  );
}
